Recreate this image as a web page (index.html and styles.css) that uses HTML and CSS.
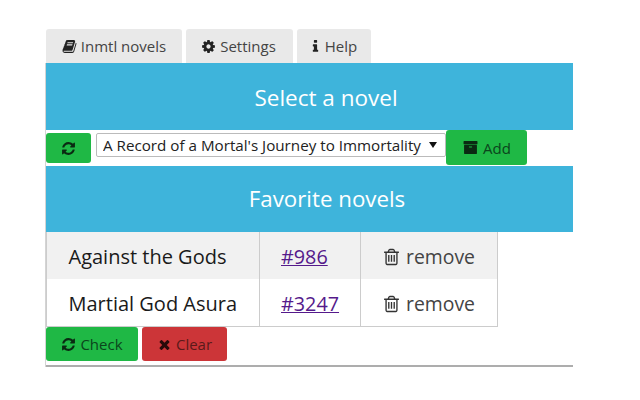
FILE: index.html
```html
<!doctype html>
<html lang="en">
	<head>
		<meta charset="UTF-8" />
		<title>Inmtl novels</title>
		<link rel="stylesheet" href="styles.css">
	</head>
	<body>
		<svg class="defs" width="0" height="0" aria-hidden="true">
			<symbol id="i-book" viewBox="0 0 1792 1792"><path d="M1703 478q40 57 18 129l-275 906q-19 64-76.5 107.5t-122.5 43.5h-923q-77 0-148.5-53.5t-99.5-131.5q-24-67-2-127 0-4 3-27t4-37q1-8-3-21.5t-3-19.5q2-11 8-21t16.5-23.5 16.5-23.5q23-38 45-91.5t30-91.5q3-10 .5-30t-.5-28q3-11 17-28t17-23q21-36 42-92t25-90q1-9-2.5-32t.5-28q4-13 22-30.5t22-22.5q19-26 42.5-84.5t27.5-96.5q1-8-3-25.5t-2-26.5q2-8 9-18t18-23 17-21q8-12 16.5-30.5t15-35 16-36 19.5-32 26.5-23.5 36-11.5 47.5 5.5l-1 3q38-9 51-9h761q74 0 114 56t18 130l-274 906q-36 119-71.5 153.5t-128.5 34.5h-869q-27 0-38 15-11 16-1 43 24 70 144 70h923q29 0 56-15.5t35-41.5l300-987q7-22 5-57 38 15 59 43zm-1064 2q-4 13 2 22.5t20 9.5h608q13 0 25.5-9.5t16.5-22.5l21-64q4-13-2-22.5t-20-9.5h-608q-13 0-25.5 9.5t-16.5 22.5zm-83 256q-4 13 2 22.5t20 9.5h608q13 0 25.5-9.5t16.5-22.5l21-64q4-13-2-22.5t-20-9.5h-608q-13 0-25.5 9.5t-16.5 22.5z"/></symbol>
			<symbol id="i-cog" viewBox="0 0 1792 1792"><path d="M1152 896q0-106-75-181t-181-75-181 75-75 181 75 181 181 75 181-75 75-181zm512-109v222q0 12-8 23t-20 13l-185 28q-19 54-39 91 35 50 107 138 10 12 10 25t-9 23q-27 37-99 108t-94 71q-12 0-26-9l-138-108q-44 23-91 38-16 136-29 186-7 28-36 28h-222q-14 0-24.5-8.5t-11.5-21.5l-28-184q-49-16-90-37l-141 107q-10 9-25 9-14 0-25-11-126-114-165-168-7-10-7-23 0-12 8-23 15-21 51-66.5t54-70.5q-27-50-41-99l-183-27q-13-2-21-12.5t-8-23.5v-222q0-12 8-23t19-13l186-28q14-46 39-92-40-57-107-138-10-12-10-24 0-10 9-23 26-36 98.5-107.5t94.5-71.5q13 0 26 10l138 107q44-23 91-38 16-136 29-186 7-28 36-28h222q14 0 24.5 8.5t11.5 21.5l28 184q49 16 90 37l142-107q9-9 24-9 13 0 25 10 129 119 165 170 7 8 7 22 0 12-8 23-15 21-51 66.5t-54 70.5q26 50 41 98l183 28q13 2 21 12.5t8 23.5z"/></symbol>
			<symbol id="i-info" viewBox="0 0 1792 1792"><path d="M1216 1344v128q0 26-19 45t-45 19h-512q-26 0-45-19t-19-45v-128q0-26 19-45t45-19h64v-384h-64q-26 0-45-19t-19-45v-128q0-26 19-45t45-19h384q26 0 45 19t19 45v576h64q26 0 45 19t19 45zm-128-1152v192q0 26-19 45t-45 19h-256q-26 0-45-19t-19-45v-192q0-26 19-45t45-19h256q26 0 45 19t19 45z"/></symbol>
			<symbol id="i-refresh" viewBox="0 0 1792 1792"><path d="M1639 1056q0 5-1 7-64 268-268 434.5t-478 166.5q-146 0-282.5-55t-243.5-157l-129 129q-19 19-45 19t-45-19-19-45v-448q0-26 19-45t45-19h448q26 0 45 19t19 45-19 45l-137 137q71 66 161 102t187 36q134 0 250-65t186-179q11-17 53-117 8-23 30-23h192q13 0 22.5 9.5t9.5 22.5zm25-800v448q0 26-19 45t-45 19h-448q-26 0-45-19t-19-45 19-45l138-138q-148-137-349-137-134 0-250 65t-186 179q-11 17-53 117-8 23-30 23h-199q-13 0-22.5-9.5t-9.5-22.5v-7q65-268 270-434.5t480-166.5q146 0 284 55.5t245 156.5l130-129q19-19 45-19t45 19 19 45z"/></symbol>
			<symbol id="i-archive" viewBox="0 0 1792 1792"><path d="M1088 832q0-26-19-45t-45-19h-256q-26 0-45 19t-19 45 19 45 45 19h256q26 0 45-19t19-45zm576-192v960q0 26-19 45t-45 19h-1408q-26 0-45-19t-19-45v-960q0-26 19-45t45-19h1408q26 0 45 19t19 45zm64-448v256q0 26-19 45t-45 19h-1536q-26 0-45-19t-19-45v-256q0-26 19-45t45-19h1536q26 0 45 19t19 45z"/></symbol>
			<symbol id="i-trash" viewBox="0 0 1792 1792"><path d="M704 736v576q0 14-9 23t-23 9h-64q-14 0-23-9t-9-23v-576q0-14 9-23t23-9h64q14 0 23 9t9 23zm256 0v576q0 14-9 23t-23 9h-64q-14 0-23-9t-9-23v-576q0-14 9-23t23-9h64q14 0 23 9t9 23zm256 0v576q0 14-9 23t-23 9h-64q-14 0-23-9t-9-23v-576q0-14 9-23t23-9h64q14 0 23 9t9 23zm128 724v-948h-896v948q0 22 7 40.5t14.5 27 10.5 8.5h832q3 0 10.5-8.5t14.5-27 7-40.5zm-672-1076h448l-48-117q-7-9-17-11h-317q-10 2-17 11zm928 32v64q0 14-9 23t-23 9h-96v948q0 83-47 143.5t-113 60.5h-832q-66 0-113-58.5t-47-141.5v-952h-96q-14 0-23-9t-9-23v-64q0-14 9-23t23-9h309l70-167q15-37 54-63t79-26h320q40 0 79 26t54 63l70 167h309q14 0 23 9t9 23z"/></symbol>
			<symbol id="i-times" viewBox="0 0 1792 1792"><path d="M1490 1322q0 40-28 68l-136 136q-28 28-68 28t-68-28l-294-294-294 294q-28 28-68 28t-68-28l-136-136q-28-28-28-68t28-68l294-294-294-294q-28-28-28-68t28-68l136-136q28-28 68-28t68 28l294 294 294-294q28-28 68-28t68 28l136 136q28 28 28 68t-28 68l-294 294 294 294q28 28 28 68z"/></symbol>
		</svg>

		<div class="tabs">
			<a class="tab tab-novels"><svg class="icon"><use href="#i-book" /></svg>Inmtl novels</a>
			<a class="tab tab-settings"><svg class="icon"><use href="#i-cog" /></svg>Settings</a>
			<a class="tab tab-help"><svg class="icon icon-info"><use href="#i-info" /></svg>Help</a>
		</div>

		<div class="panel">
			<h2 class="banner">Select a novel</h2>

			<div class="select-row">
				<button class="btn btn-green btn-reload"><svg class="icon"><use href="#i-refresh" /></svg></button>
				<div class="select-wrap">
					<select class="novel-select">
						<option>A Record of a Mortal's Journey to Immortality</option>
					</select>
					<span class="select-arrow"></span>
				</div>
				<button class="btn btn-green btn-add"><svg class="icon"><use href="#i-archive" /></svg>Add</button>
			</div>

			<h2 class="banner banner-fav">Favorite novels</h2>

			<table class="favorites">
				<tr>
					<td class="col-name">Against the Gods</td>
					<td class="col-chapter"><a href="#" class="chapter">#986</a></td>
					<td class="col-remove"><svg class="icon"><use href="#i-trash" /></svg>remove</td>
				</tr>
				<tr>
					<td class="col-name">Martial God Asura</td>
					<td class="col-chapter"><a href="#" class="chapter">#3247</a></td>
					<td class="col-remove"><svg class="icon"><use href="#i-trash" /></svg>remove</td>
				</tr>
			</table>

			<div class="actions">
				<button class="btn btn-green btn-check"><svg class="icon"><use href="#i-refresh" /></svg>Check</button>
				<button class="btn btn-red btn-clear"><svg class="icon"><use href="#i-times" /></svg>Clear</button>
			</div>
		</div>
	</body>
</html>
```

FILE: styles.css
```css
body {
	font-family: "Open Sans", "Noto Sans", sans-serif;
	margin: 0;
	padding: 29px 67px 0 46px;
	background-color: white;
	color: #333;
}
.defs {
	display: block;
	height: 0;
}
.icon {
	width: 15px;
	height: 15px;
	fill: currentColor;
	flex: none;
}
.tabs {
	display: flex;
	gap: 4px;
	height: 34px;
}
.tab {
	display: flex;
	align-items: center;
	justify-content: center;
	gap: 4px;
	background-color: #e9e9e9;
	border-radius: 3px 3px 0 0;
	font-size: 15px;
	color: #444;
}
.tab .icon {
	color: #222;
}
.tab-novels {
	width: 136px;
}
.tab-settings {
	width: 107px;
	box-sizing: border-box;
	padding-right: 2px;
}
.tab-help {
	width: 74px;
	box-sizing: border-box;
	padding-right: 3px;
}
.icon-info {
	margin-right: -2px;
}
.panel {
	box-sizing: border-box;
	height: 304px;
	border-bottom: 2px solid #adadad;
	box-shadow: -1px 0 0 #d4d4d4;
}
.banner {
	margin: 0;
	height: 67px;
	padding: 2px 0 0 33px;
	box-sizing: border-box;
	display: flex;
	align-items: center;
	justify-content: center;
	background-color: #3eb4db;
	color: white;
	font-size: 22.5px;
	font-weight: normal;
}
.banner-fav {
	height: 66px;
	padding: 0 0 2px 35px;
	font-size: 22.3px;
}
.select-row {
	display: flex;
	height: 35px;
	border-bottom: 1px solid white;
	align-items: flex-start;
}
.btn {
	display: flex;
	align-items: center;
	justify-content: center;
	gap: 4px;
	padding: 0;
	border: 1px solid transparent;
	border-radius: 3px;
	font-family: inherit;
	font-size: 15px;
	cursor: pointer;
}
.btn-green {
	background-color: #1fb845;
	color: #0b451c;
}
.btn-green .icon {
	color: #0a2a12;
}
.btn-red {
	background-color: #cc3538;
	color: #5a1a1a;
}
.btn-red .icon {
	color: #2a0a0a;
}
.btn-reload {
	width: 45px;
	height: 30px;
	margin-top: 3px;
}
.select-wrap {
	position: relative;
	margin: 3px 0 0 5px;
}
.novel-select {
	display: block;
	appearance: none;
	width: 350px;
	height: 24px;
	padding: 0 0 0 6px;
	border: 1px solid #bbb;
	border-radius: 2px;
	background-color: white;
	font-family: inherit;
	font-size: 15.2px;
	color: #222;
}
.select-arrow {
	position: absolute;
	right: 9px;
	top: 9px;
	border-left: 4px solid transparent;
	border-right: 4px solid transparent;
	border-top: 6px solid #111;
}
.btn-add {
	width: 81px;
	height: 35px;
	gap: 5px;
	padding-left: 1px;
}
.favorites {
	width: 452px;
	height: 95px;
	border-collapse: collapse;
	table-layout: fixed;
	font-size: 20px;
	color: #1a1a1a;
}
.favorites td {
	box-sizing: border-box;
	height: 47px;
	border: 1px solid #ccc;
	border-top: none;
	padding: 1px 0 0;
	white-space: nowrap;
}
.favorites tr:first-child td {
	padding-top: 2px;
	background-color: #f1f1f1;
	border-bottom: none;
}
.col-name {
	width: 213px;
	padding-left: 21.5px !important;
}
.col-chapter {
	width: 101px;
	padding-left: 21px !important;
	font-size: 19.8px;
}
.col-remove {
	color: #444;
	padding-left: 21px !important;
	font-size: 19.4px;
}
.col-remove .icon {
	width: 19px;
	height: 20px;
	margin-right: 5px;
	vertical-align: -3px;
	color: #333;
}
.chapter {
	color: #551a8b;
}
.actions {
	display: flex;
	gap: 4px;
	height: 36px;
}
.btn-check {
	width: 92px;
	height: 34px;
}
.btn-clear {
	width: 85px;
	height: 34px;
}
```
